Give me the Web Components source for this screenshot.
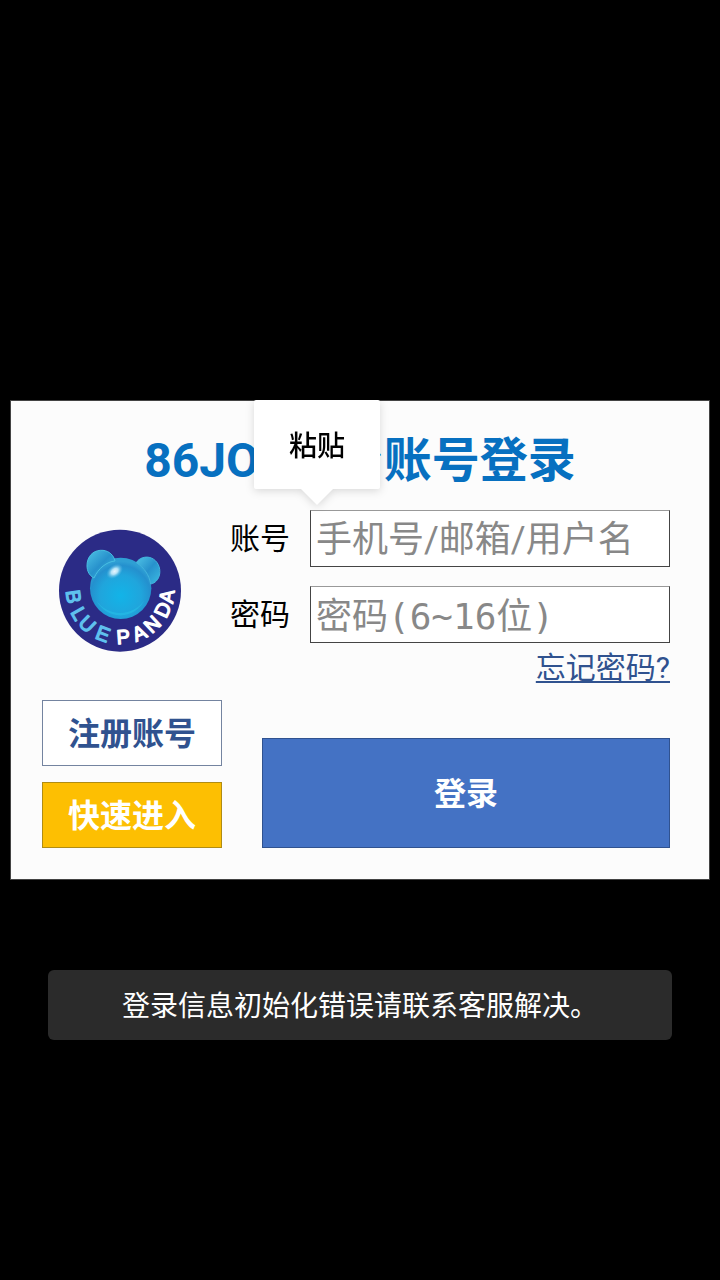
<!DOCTYPE html>
<html lang="zh-CN">
<head>
<meta charset="utf-8">
<meta name="viewport" content="width=device-width, initial-scale=1">
<title>86JOY平台账号登录</title>
<style>
  body {
    margin: 0;
    background: #000;
    font-family: Roboto, "Noto Sans CJK SC", sans-serif;
  }
</style>
</head>
<body>
<login-page>
  <login-panel>
    <span slot="title">86JOY平台账号登录</span>
    <panda-logo slot="logo"></panda-logo>
    <form-field slot="fields" label="账号" placeholder="手机号/邮箱/用户名"></form-field>
    <form-field slot="fields" label="密码" type="password" placeholder="密码(6~16位)"></form-field>
    <text-link slot="forgot">忘记密码?</text-link>
    <action-button slot="side" class="outline">注册账号</action-button>
    <action-button slot="side" class="quick">快速进入</action-button>
    <action-button slot="submit" class="primary">登录</action-button>
    <paste-menu slot="menu">粘贴</paste-menu>
  </login-panel>
  <toast-message slot="toast">登录信息初始化错误请联系客服解决。</toast-message>
</login-page>

<script>
class LoginPage extends HTMLElement {
  constructor() {
    super();
    this.attachShadow({ mode: "open" });
    this.shadowRoot.innerHTML = `
      <style>
        :host {
          display: flex;
          flex-direction: column;
          justify-content: center;
          min-height: 100vh;
          box-sizing: border-box;
          padding: 0 10px;
        }
      </style>
      <slot></slot>
      <slot name="toast"></slot>
    `;
  }
}

class LoginPanel extends HTMLElement {
  constructor() {
    super();
    this.attachShadow({ mode: "open" });
    this.shadowRoot.innerHTML = `
      <style>
        :host {
          display: block;
          position: relative;
          background: #fcfcfc;
          border: 1px solid #444;
        }
        h1 {
          margin: 0;
          padding: 32px 0 21px;
          font-size: 48px;
          line-height: 56px;
          font-weight: bold;
          text-align: center;
          color: #0770c0;
        }
        .body {
          display: flex;
          flex-direction: column;
          gap: 16px;
          padding: 0 39px 31px 31px;
        }
        .top {
          display: flex;
          align-items: flex-start;
          gap: 32px;
        }
        .logo {
          padding: 18px 16px 0;
        }
        .fields {
          flex: 1;
          min-width: 0;
          display: flex;
          flex-direction: column;
          gap: 19px;
        }
        .forgot {
          display: flex;
          justify-content: flex-end;
          margin-top: -10px;
        }
        .bottom {
          display: flex;
          align-items: flex-end;
          gap: 40px;
        }
        .side {
          display: flex;
          flex-direction: column;
          gap: 16px;
          width: 180px;
        }
        .submit {
          flex: 1;
        }
      </style>
      <h1><slot name="title"></slot></h1>
      <div class="body">
        <div class="top">
          <div class="logo"><slot name="logo"></slot></div>
          <div class="fields">
            <slot name="fields"></slot>
            <div class="forgot"><slot name="forgot"></slot></div>
          </div>
        </div>
        <div class="bottom">
          <div class="side"><slot name="side"></slot></div>
          <div class="submit"><slot name="submit"></slot></div>
        </div>
      </div>
      <slot name="menu"></slot>
    `;
  }
}

class PandaLogo extends HTMLElement {
  constructor() {
    super();
    this.attachShadow({ mode: "open" });
    this.shadowRoot.innerHTML = `
      <style>
        :host {
          display: block;
          width: 124px;
          height: 124px;
        }
        svg {
          display: block;
        }
        text {
          font-family: "Liberation Sans", sans-serif;
          font-size: 60px;
          stroke-width: 4;
          stroke-linejoin: round;
        }
        .blue {
          fill: #5fc0ee;
          stroke: #5fc0ee;
        }
        .white {
          fill: #fff;
          stroke: #fff;
        }
      </style>
      <svg viewBox="24 22 372 372" width="124" height="124" role="img" aria-label="Blue Panda">
        <defs>
          <radialGradient id="head" cx="50%" cy="62%" r="56%">
            <stop offset="0" stop-color="#12b4e8"/>
            <stop offset="0.6" stop-color="#20a5dc"/>
            <stop offset="0.88" stop-color="#2490ce"/>
            <stop offset="1" stop-color="#2f9fd4"/>
          </radialGradient>
          <linearGradient id="ear" x1="0" y1="0" x2="1" y2="1">
            <stop offset="0" stop-color="#4fc3e6"/>
            <stop offset="0.5" stop-color="#2791cc"/>
            <stop offset="1" stop-color="#3cbbe3"/>
          </linearGradient>
          <radialGradient id="shine">
            <stop offset="0" stop-color="#e8f6ff"/>
            <stop offset="0.4" stop-color="#b5e3f7"/>
            <stop offset="1" stop-color="#4fb7e3" stop-opacity="0"/>
          </radialGradient>
        </defs>
        <circle cx="210" cy="210" r="183" fill="#2b2b86"/>
        <circle cx="212" cy="203" r="92" fill="url(#head)"/>
        <path d="M139 239A80 80 0 0 0 283 239C267 263 240 277 211 277C180 277 155 263 139 239Z" fill="#2bd0ed" opacity="0.35"/>
        <path d="M132 172C116 164 108 146 112 124C117 100 136 87 159 89C178 91 191 104 195 121C171 123 145 142 132 172Z" fill="url(#ear)" stroke="#48bfe2" stroke-width="3"/>
        <path d="M259 126C267 112 287 105 304 112C323 120 332 141 329 160C326 177 315 188 302 190C298 164 283 141 259 126Z" fill="url(#ear)" stroke="#43b4dd" stroke-width="3"/>
        <ellipse cx="194" cy="152" rx="28" ry="19" transform="rotate(-38 194 152)" fill="url(#shine)"/>
        <text
          x="47 61 82 133 186 201 258 305 348 368"
          y="211 275 310 352 366 371 364 341 296 250"
          rotate="82 60 44 21 8 -4 -24 -43 -65 -82"><tspan class="blue">BLUE </tspan><tspan class="white">PANDA</tspan></text>
      </svg>
    `;
  }
}

class FormField extends HTMLElement {
  constructor() {
    super();
    this.attachShadow({ mode: "open" });
    this.shadowRoot.innerHTML = `
      <style>
        :host {
          display: flex;
          align-items: center;
          gap: 20px;
        }
        label {
          flex: none;
          font-size: 30px;
          line-height: 40px;
          color: #000;
        }
        input {
          flex: 1;
          min-width: 0;
          height: 57px;
          box-sizing: border-box;
          margin: 0;
          padding: 3px 5px 0;
          border: 1px solid #444;
          border-top-color: #999;
          border-radius: 0;
          background: #fff;
          font-family: inherit;
          font-size: 36px;
          color: #000;
        }
        input[type="password"] {
          font-family: "DejaVu Sans Mono", "Noto Sans CJK SC", monospace;
        }
        input::placeholder {
          color: #888;
          opacity: 1;
        }
      </style>
      <label for="input"></label>
      <input id="input">
    `;
  }
  connectedCallback() {
    const input = this.shadowRoot.querySelector("input");
    this.shadowRoot.querySelector("label").textContent = this.getAttribute("label");
    input.type = this.getAttribute("type") || "text";
    input.placeholder = this.getAttribute("placeholder") || "";
  }
}

class TextLink extends HTMLElement {
  constructor() {
    super();
    this.attachShadow({ mode: "open" });
    this.shadowRoot.innerHTML = `
      <style>
        :host {
          display: block;
        }
        a {
          display: block;
          font-size: 30px;
          line-height: 32px;
          color: #30528f;
          text-decoration: underline;
          text-decoration-thickness: 2px;
          text-underline-offset: 3px;
          text-decoration-skip-ink: none;
        }
      </style>
      <a href="#"><slot></slot></a>
    `;
  }
}

class ActionButton extends HTMLElement {
  constructor() {
    super();
    this.attachShadow({ mode: "open" });
    this.shadowRoot.innerHTML = `
      <style>
        :host {
          display: block;
        }
        button {
          display: block;
          width: 100%;
          height: 66px;
          margin: 0;
          padding: 0 0 4px;
          border: 1px solid #7484a0;
          background: #fff;
          font-family: inherit;
          font-size: 32px;
          font-weight: bold;
          color: #30528f;
        }
        :host(.quick) button {
          border-color: #b08c14;
          background: #fdbf02;
          color: #fff;
        }
        :host(.primary) button {
          height: 110px;
          border-color: #30528f;
          background: #4472c4;
          color: #fff;
        }
      </style>
      <button type="button"><slot></slot></button>
    `;
  }
}

class PasteMenu extends HTMLElement {
  constructor() {
    super();
    this.attachShadow({ mode: "open" });
    this.shadowRoot.innerHTML = `
      <style>
        :host {
          position: absolute;
          top: -1px;
          left: 243px;
          display: flex;
          flex-direction: column;
          align-items: center;
          filter: drop-shadow(0 2px 4px rgba(0,0,0,0.14));
        }
        button {
          height: 89px;
          margin: 0;
          padding: 0 35px 2px;
          border: 0;
          border-radius: 2px;
          background: #fff;
          font-family: inherit;
          font-size: 28px;
          font-weight: 500;
          color: #000;
        }
        .arrow {
          width: 32px;
          height: 16px;
          background: #fff;
          clip-path: polygon(0 0, 100% 0, 50% 100%);
        }
      </style>
      <button type="button"><slot></slot></button>
      <div class="arrow"></div>
    `;
  }
}

class ToastMessage extends HTMLElement {
  constructor() {
    super();
    this.attachShadow({ mode: "open" });
    this.shadowRoot.innerHTML = `
      <style>
        :host {
          position: fixed;
          left: 48px;
          right: 48px;
          bottom: 240px;
          padding: 17px 24px 13px;
          box-sizing: border-box;
          border-radius: 6px;
          background: #2b2b2b;
          font-size: 28px;
          line-height: 40px;
          text-align: center;
          color: #fff;
        }
      </style>
      <div role="status"><slot></slot></div>
    `;
  }
}

customElements.define("login-page", LoginPage);
customElements.define("login-panel", LoginPanel);
customElements.define("panda-logo", PandaLogo);
customElements.define("form-field", FormField);
customElements.define("text-link", TextLink);
customElements.define("action-button", ActionButton);
customElements.define("paste-menu", PasteMenu);
customElements.define("toast-message", ToastMessage);
</script>
</body>
</html>
